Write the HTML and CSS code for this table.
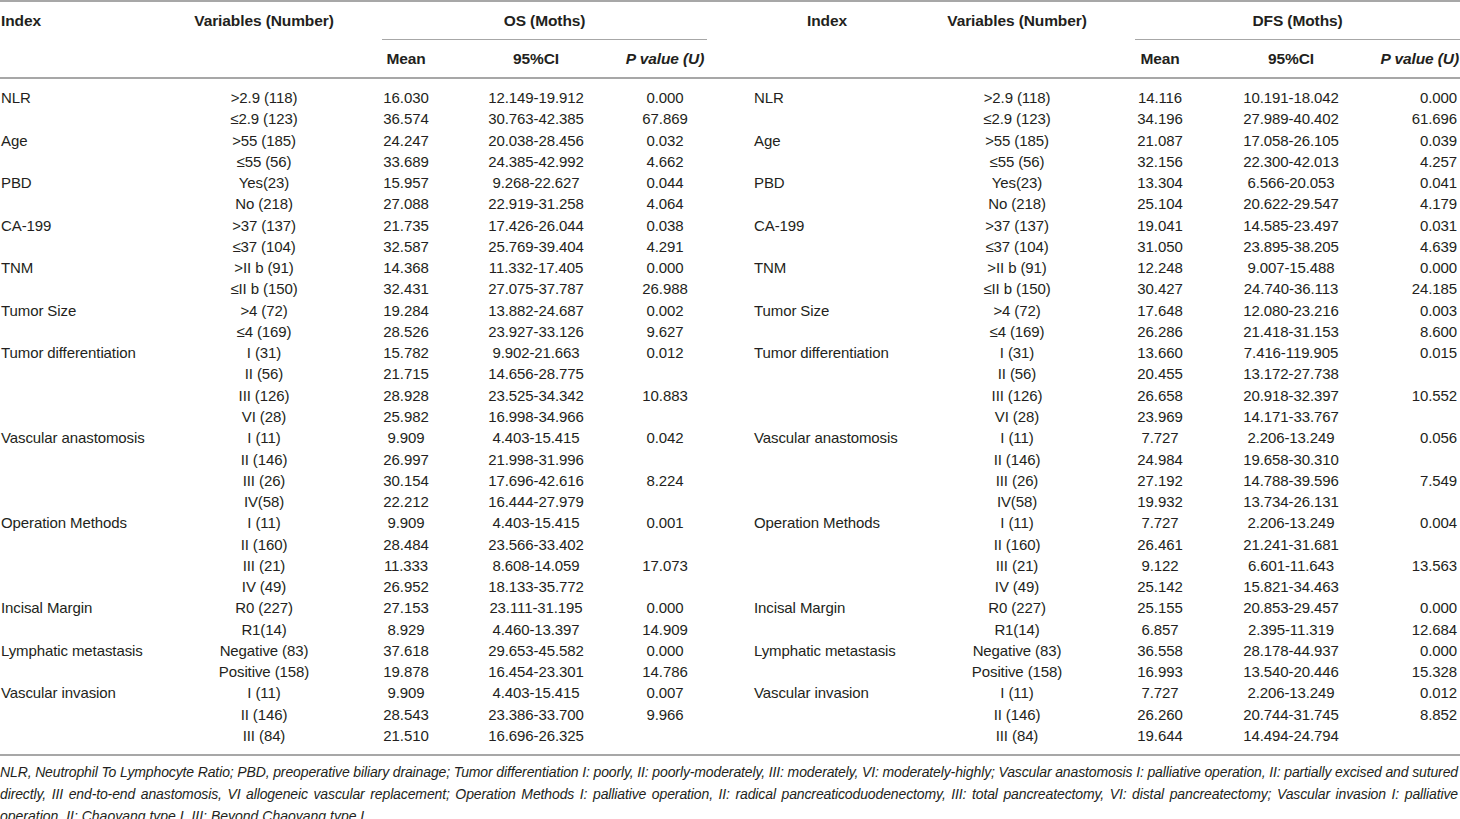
FILE: index.html
```html
<!DOCTYPE html>
<html>
<head>
<meta charset="utf-8">
<link rel="stylesheet" href="styles.css">
</head>
<body>
<div class="page">
<table class="tbl">
<colgroup>
<col class="c1"><col class="c2"><col class="c3"><col class="c4"><col class="c5">
<col class="c6"><col class="c7"><col class="c8"><col class="c9"><col class="c10">
</colgroup>
<thead>
<tr class="h1">
<th rowspan="2" class="idx-l">Index</th>
<th rowspan="2" class="var">Variables (Number)</th>
<th colspan="3" class="grp"><div class="grp-l">OS (Moths)</div></th>
<th rowspan="2" class="idx-r">Index</th>
<th rowspan="2" class="var">Variables (Number)</th>
<th colspan="3" class="grp"><div class="grp-r">DFS (Moths)</div></th>
</tr>
<tr class="h2">
<th>Mean</th><th>95%CI</th><th class="pv"><i>P value (U)</i></th>
<th>Mean</th><th>95%CI</th><th class="pv last"><i>P value (U)</i></th>
</tr>
</thead>
<tbody>
<tr><td class="il">NLR</td><td>&gt;2.9 (118)</td><td>16.030</td><td>12.149-19.912</td><td>0.000</td><td class="ir">NLR</td><td>&gt;2.9 (118)</td><td>14.116</td><td>10.191-18.042</td><td class="last">0.000</td></tr>
<tr><td class="il"></td><td>≤2.9 (123)</td><td>36.574</td><td>30.763-42.385</td><td>67.869</td><td class="ir"></td><td>≤2.9 (123)</td><td>34.196</td><td>27.989-40.402</td><td class="last">61.696</td></tr>
<tr><td class="il">Age</td><td>&gt;55 (185)</td><td>24.247</td><td>20.038-28.456</td><td>0.032</td><td class="ir">Age</td><td>&gt;55 (185)</td><td>21.087</td><td>17.058-26.105</td><td class="last">0.039</td></tr>
<tr><td class="il"></td><td>≤55 (56)</td><td>33.689</td><td>24.385-42.992</td><td>4.662</td><td class="ir"></td><td>≤55 (56)</td><td>32.156</td><td>22.300-42.013</td><td class="last">4.257</td></tr>
<tr><td class="il">PBD</td><td>Yes(23)</td><td>15.957</td><td>9.268-22.627</td><td>0.044</td><td class="ir">PBD</td><td>Yes(23)</td><td>13.304</td><td>6.566-20.053</td><td class="last">0.041</td></tr>
<tr><td class="il"></td><td>No (218)</td><td>27.088</td><td>22.919-31.258</td><td>4.064</td><td class="ir"></td><td>No (218)</td><td>25.104</td><td>20.622-29.547</td><td class="last">4.179</td></tr>
<tr><td class="il">CA-199</td><td>&gt;37 (137)</td><td>21.735</td><td>17.426-26.044</td><td>0.038</td><td class="ir">CA-199</td><td>&gt;37 (137)</td><td>19.041</td><td>14.585-23.497</td><td class="last">0.031</td></tr>
<tr><td class="il"></td><td>≤37 (104)</td><td>32.587</td><td>25.769-39.404</td><td>4.291</td><td class="ir"></td><td>≤37 (104)</td><td>31.050</td><td>23.895-38.205</td><td class="last">4.639</td></tr>
<tr><td class="il">TNM</td><td>&gt;II b (91)</td><td>14.368</td><td>11.332-17.405</td><td>0.000</td><td class="ir">TNM</td><td>&gt;II b (91)</td><td>12.248</td><td>9.007-15.488</td><td class="last">0.000</td></tr>
<tr><td class="il"></td><td>≤II b (150)</td><td>32.431</td><td>27.075-37.787</td><td>26.988</td><td class="ir"></td><td>≤II b (150)</td><td>30.427</td><td>24.740-36.113</td><td class="last">24.185</td></tr>
<tr><td class="il">Tumor Size</td><td>&gt;4 (72)</td><td>19.284</td><td>13.882-24.687</td><td>0.002</td><td class="ir">Tumor Size</td><td>&gt;4 (72)</td><td>17.648</td><td>12.080-23.216</td><td class="last">0.003</td></tr>
<tr><td class="il"></td><td>≤4 (169)</td><td>28.526</td><td>23.927-33.126</td><td>9.627</td><td class="ir"></td><td>≤4 (169)</td><td>26.286</td><td>21.418-31.153</td><td class="last">8.600</td></tr>
<tr><td class="il">Tumor differentiation</td><td>I (31)</td><td>15.782</td><td>9.902-21.663</td><td>0.012</td><td class="ir">Tumor differentiation</td><td>I (31)</td><td>13.660</td><td>7.416-119.905</td><td class="last">0.015</td></tr>
<tr><td class="il"></td><td>II (56)</td><td>21.715</td><td>14.656-28.775</td><td></td><td class="ir"></td><td>II (56)</td><td>20.455</td><td>13.172-27.738</td><td class="last"></td></tr>
<tr><td class="il"></td><td>III (126)</td><td>28.928</td><td>23.525-34.342</td><td>10.883</td><td class="ir"></td><td>III (126)</td><td>26.658</td><td>20.918-32.397</td><td class="last">10.552</td></tr>
<tr><td class="il"></td><td>VI (28)</td><td>25.982</td><td>16.998-34.966</td><td></td><td class="ir"></td><td>VI (28)</td><td>23.969</td><td>14.171-33.767</td><td class="last"></td></tr>
<tr><td class="il">Vascular anastomosis</td><td>I (11)</td><td>9.909</td><td>4.403-15.415</td><td>0.042</td><td class="ir">Vascular anastomosis</td><td>I (11)</td><td>7.727</td><td>2.206-13.249</td><td class="last">0.056</td></tr>
<tr><td class="il"></td><td>II (146)</td><td>26.997</td><td>21.998-31.996</td><td></td><td class="ir"></td><td>II (146)</td><td>24.984</td><td>19.658-30.310</td><td class="last"></td></tr>
<tr><td class="il"></td><td>III (26)</td><td>30.154</td><td>17.696-42.616</td><td>8.224</td><td class="ir"></td><td>III (26)</td><td>27.192</td><td>14.788-39.596</td><td class="last">7.549</td></tr>
<tr><td class="il"></td><td>IV(58)</td><td>22.212</td><td>16.444-27.979</td><td></td><td class="ir"></td><td>IV(58)</td><td>19.932</td><td>13.734-26.131</td><td class="last"></td></tr>
<tr><td class="il">Operation Methods</td><td>I (11)</td><td>9.909</td><td>4.403-15.415</td><td>0.001</td><td class="ir">Operation Methods</td><td>I (11)</td><td>7.727</td><td>2.206-13.249</td><td class="last">0.004</td></tr>
<tr><td class="il"></td><td>II (160)</td><td>28.484</td><td>23.566-33.402</td><td></td><td class="ir"></td><td>II (160)</td><td>26.461</td><td>21.241-31.681</td><td class="last"></td></tr>
<tr><td class="il"></td><td>III (21)</td><td>11.333</td><td>8.608-14.059</td><td>17.073</td><td class="ir"></td><td>III (21)</td><td>9.122</td><td>6.601-11.643</td><td class="last">13.563</td></tr>
<tr><td class="il"></td><td>IV (49)</td><td>26.952</td><td>18.133-35.772</td><td></td><td class="ir"></td><td>IV (49)</td><td>25.142</td><td>15.821-34.463</td><td class="last"></td></tr>
<tr><td class="il">Incisal Margin</td><td>R0 (227)</td><td>27.153</td><td>23.111-31.195</td><td>0.000</td><td class="ir">Incisal Margin</td><td>R0 (227)</td><td>25.155</td><td>20.853-29.457</td><td class="last">0.000</td></tr>
<tr><td class="il"></td><td>R1(14)</td><td>8.929</td><td>4.460-13.397</td><td>14.909</td><td class="ir"></td><td>R1(14)</td><td>6.857</td><td>2.395-11.319</td><td class="last">12.684</td></tr>
<tr><td class="il">Lymphatic metastasis</td><td>Negative (83)</td><td>37.618</td><td>29.653-45.582</td><td>0.000</td><td class="ir">Lymphatic metastasis</td><td>Negative (83)</td><td>36.558</td><td>28.178-44.937</td><td class="last">0.000</td></tr>
<tr><td class="il"></td><td>Positive (158)</td><td>19.878</td><td>16.454-23.301</td><td>14.786</td><td class="ir"></td><td>Positive (158)</td><td>16.993</td><td>13.540-20.446</td><td class="last">15.328</td></tr>
<tr><td class="il">Vascular invasion</td><td>I (11)</td><td>9.909</td><td>4.403-15.415</td><td>0.007</td><td class="ir">Vascular invasion</td><td>I (11)</td><td>7.727</td><td>2.206-13.249</td><td class="last">0.012</td></tr>
<tr><td class="il"></td><td>II (146)</td><td>28.543</td><td>23.386-33.700</td><td>9.966</td><td class="ir"></td><td>II (146)</td><td>26.260</td><td>20.744-31.745</td><td class="last">8.852</td></tr>
<tr><td class="il"></td><td>III (84)</td><td>21.510</td><td>16.696-26.325</td><td></td><td class="ir"></td><td>III (84)</td><td>19.644</td><td>14.494-24.794</td><td class="last"></td></tr>
</tbody>
</table>
<p class="note"><span class="ln full">NLR, Neutrophil To Lymphocyte Ratio; PBD, preoperative biliary drainage; Tumor differentiation I: poorly, II: poorly-moderately, III: moderately, VI: moderately-highly; Vascular anastomosis I: palliative operation, II: partially excised and sutured</span><span class="ln full">directly, III end-to-end anastomosis, VI allogeneic vascular replacement; Operation Methods I: palliative operation, II: radical pancreaticoduodenectomy, III: total pancreatectomy, VI: distal pancreatectomy; Vascular invasion I: palliative</span><span class="ln">operation, II: Chaoyang type I, III: Beyond Chaoyang type I.</span></p>
</div>
</body>
</html>
```

FILE: styles.css
```css
html, body {
  margin: 0;
  padding: 0;
  background: #ffffff;
}
body {
  width: 1460px;
  height: 819px;
  overflow: hidden;
  font-family: "Liberation Sans", Arial, sans-serif;
  color: #231f20;
}
.page {
  width: 1460px;
}
.tbl {
  width: 1460px;
  table-layout: fixed;
  border-collapse: collapse;
  border-top: 2px solid #a7a7a7;
  border-bottom: 2px solid #a7a7a7;
}
.c1 { width: 190px; }
.c2 { width: 148px; }
.c3 { width: 136px; }
.c4 { width: 124px; }
.c5 { width: 134px; }
.c6 { width: 190px; }
.c7 { width: 190px; }
.c8 { width: 96px; }
.c9 { width: 166px; }
.c10 { width: 86px; }

thead {
  border-bottom: 2px solid #a7a7a7;
}
th {
  font-weight: bold;
  font-size: 15.5px;
  letter-spacing: -0.1px;
  padding: 0;
  text-align: center;
  white-space: nowrap;
}
.h1 th {
  height: 37px;
  line-height: 37px;
  vertical-align: top;
}
.h2 th {
  height: 37px;
  line-height: 37px;
  vertical-align: middle;
}
th.idx-l {
  text-align: left;
  padding-left: 1px;
}
.grp-l, .grp-r {
  border-bottom: 1px solid #a7a7a7;
  line-height: 37px;
}
.grp-l {
  margin-left: 44px;
  margin-right: 25px;
}
.grp-r {
  margin-left: 23px;
  margin-right: 0;
}
th.last {
  text-align: right;
  padding-right: 1px;
}
td {
  font-size: 15px;
  letter-spacing: -0.1px;
  padding: 0;
  height: 21.27px;
  line-height: 21.27px;
  text-align: center;
  white-space: nowrap;
}
tbody tr:first-child td {
  padding-top: 8px;
}
tbody tr:last-child td {
  padding-bottom: 8px;
}
td.il {
  text-align: left;
  padding-left: 1px;
}
td.ir {
  text-align: left;
  padding-left: 22px;
}
td.last {
  text-align: right;
  padding-right: 3px;
}
.note {
  margin: 6px 0 0 0;
  font-style: italic;
  font-size: 14px;
  line-height: 21.7px;
  width: 1458px;
}
.ln {
  display: block;
  white-space: nowrap;
}
.ln.full {
  white-space: normal;
  letter-spacing: -0.12px;
  word-spacing: -0.6px;
  text-align: justify;
  text-align-last: justify;
}
```
